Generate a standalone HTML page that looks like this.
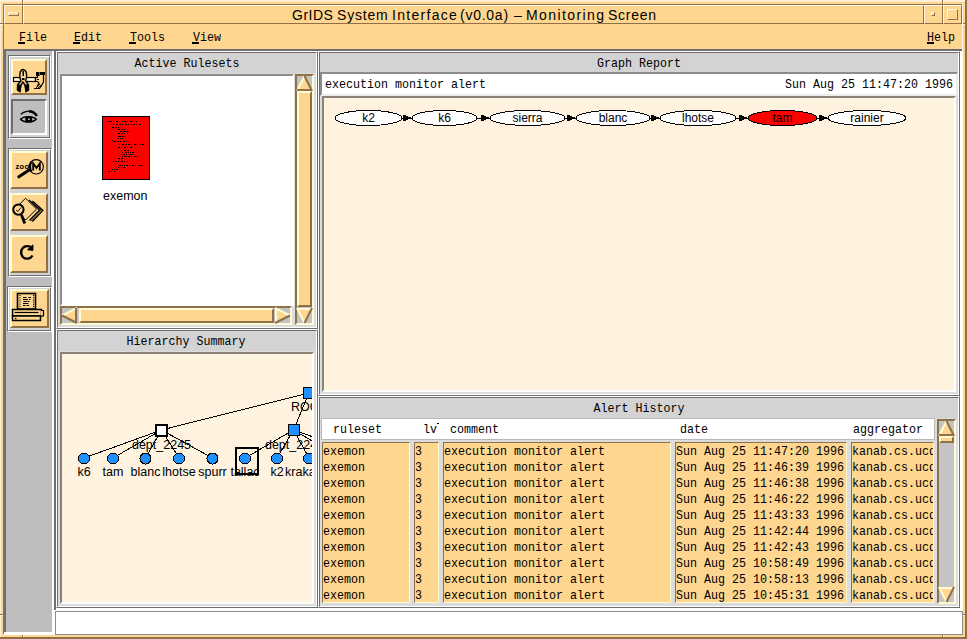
<!DOCTYPE html><html><head><meta charset="utf-8"><style>
*{margin:0;padding:0}
html,body{width:967px;height:639px;overflow:hidden;background:#fed690}
div,span,svg{position:absolute;box-sizing:content-box}
.m{font-family:"Liberation Mono",monospace;font-size:11.67px;line-height:14px;white-space:pre;color:#000;display:inline-block;transform:scaleY(1.12);transform-origin:0 70%}
.s{font-family:"Liberation Sans",sans-serif;white-space:pre;color:#000}
.title{font-size:14px;letter-spacing:0.81px;line-height:16px}
u{text-decoration:none}
</style></head><body><div style="left:0px;top:0px;width:967px;height:639px;background:#fed690;"></div><div style="left:0px;top:0px;width:967px;height:2px;background:#fdefd8;"></div><div style="left:0px;top:0px;width:1px;height:639px;background:#fdefd8;"></div><div style="left:965px;top:0px;width:2px;height:639px;background:#8f7049;"></div><div style="left:0px;top:637px;width:967px;height:2px;background:#8f7049;"></div><div style="left:3px;top:4px;width:959px;height:1px;background:#8f7049;"></div><div style="left:3px;top:4px;width:1px;height:631px;background:#8f7049;"></div><div style="left:962px;top:4px;width:1px;height:631px;background:#fff8e8;"></div><div style="left:3px;top:634px;width:960px;height:1px;background:#fff8e8;"></div><div style="left:22px;top:0px;width:1px;height:4px;background:#8f7049;"></div><div style="left:23px;top:0px;width:1px;height:4px;background:#fff8e8;"></div><div style="left:0px;top:23px;width:3px;height:1px;background:#8f7049;"></div><div style="left:0px;top:24px;width:3px;height:1px;background:#fff8e8;"></div><div style="left:942px;top:0px;width:1px;height:4px;background:#8f7049;"></div><div style="left:943px;top:0px;width:1px;height:4px;background:#fff8e8;"></div><div style="left:963px;top:23px;width:2px;height:1px;background:#8f7049;"></div><div style="left:963px;top:24px;width:2px;height:1px;background:#fff8e8;"></div><div style="left:22px;top:635px;width:1px;height:2px;background:#8f7049;"></div><div style="left:23px;top:635px;width:1px;height:2px;background:#fff8e8;"></div><div style="left:0px;top:614px;width:3px;height:1px;background:#8f7049;"></div><div style="left:0px;top:615px;width:3px;height:1px;background:#fff8e8;"></div><div style="left:942px;top:635px;width:1px;height:2px;background:#8f7049;"></div><div style="left:943px;top:635px;width:1px;height:2px;background:#fff8e8;"></div><div style="left:963px;top:614px;width:2px;height:1px;background:#8f7049;"></div><div style="left:963px;top:615px;width:2px;height:1px;background:#fff8e8;"></div><div style="left:4px;top:5px;width:17px;height:17px;border:1px solid;border-color:#fff8e8 #8f7049 #8f7049 #fff8e8;"></div><div style="left:23px;top:5px;width:899px;height:17px;border:1px solid;border-color:#fff8e8 #8f7049 #8f7049 #fff8e8;"></div><div style="left:924px;top:5px;width:17px;height:17px;border:1px solid;border-color:#fff8e8 #8f7049 #8f7049 #fff8e8;"></div><div style="left:943px;top:5px;width:17px;height:17px;border:1px solid;border-color:#fff8e8 #8f7049 #8f7049 #fff8e8;"></div><div style="left:8px;top:12px;width:9px;height:2px;border:1px solid;border-color:#fff8e8 #8f7049 #8f7049 #fff8e8;"></div><div style="left:931px;top:12px;width:2px;height:2px;border:1px solid;border-color:#fff8e8 #8f7049 #8f7049 #fff8e8;"></div><div style="left:947px;top:9px;width:9px;height:9px;border:1px solid;border-color:#fff8e8 #8f7049 #8f7049 #fff8e8;"></div><span class="s title" style="left:292px;top:7px;letter-spacing:0.5px">GrIDS</span><span class="s title" style="left:337px;top:7px;letter-spacing:0.8px">System</span><span class="s title" style="left:392px;top:7px;letter-spacing:1.3px">Interface</span><span class="s title" style="left:460px;top:7px;letter-spacing:0.75px">(v0.0a)</span><span class="s title" style="left:514px;top:7px;letter-spacing:0px">–</span><span class="s title" style="left:526px;top:7px;letter-spacing:1.4px">Monitoring</span><span class="s title" style="left:608px;top:7px;letter-spacing:0.75px">Screen</span><span class="m" style="left:19px;top:31px;">File</span><span class="m" style="left:74px;top:31px;">Edit</span><span class="m" style="left:130px;top:31px;">Tools</span><span class="m" style="left:193px;top:31px;">View</span><span class="m" style="left:927px;top:31px;">Help</span><div style="left:18px;top:42px;width:7px;height:2px;background:#000;"></div><div style="left:73px;top:42px;width:7px;height:2px;background:#000;"></div><div style="left:129px;top:42px;width:7px;height:2px;background:#000;"></div><div style="left:192px;top:42px;width:7px;height:2px;background:#000;"></div><div style="left:927px;top:42px;width:7px;height:2px;background:#000;"></div><div style="left:4px;top:49px;width:958px;height:586px;background:#ffffff;"></div><div style="left:4px;top:49px;width:958px;height:2px;background:#6e6e6e;"></div><div style="left:4px;top:51px;width:2px;height:581px;background:#6e6e6e;"></div><div style="left:6px;top:51px;width:46px;height:581px;background:#bebebe;"></div><div style="left:54px;top:51px;width:2px;height:559px;background:#6e6e6e;"></div><div style="left:56px;top:51px;width:262px;height:278px;background:#dcdcdc;"></div><div style="left:56px;top:51px;width:260px;height:276px;border:1px solid;border-color:#ffffff #6e6e6e #6e6e6e #ffffff;"></div><div style="left:57px;top:52px;width:258px;height:274px;border:1px solid;border-color:#6e6e6e #ffffff #ffffff #6e6e6e;"></div><div style="left:58px;top:53px;width:258px;height:20px;background:#d3d3d3;"></div><span class="m" style="left:187px;top:57px;transform:translateX(-50%) scaleY(1.12);transform-origin:50% 70%;">Active Rulesets</span><div style="left:56px;top:329px;width:262px;height:279px;background:#dcdcdc;"></div><div style="left:56px;top:329px;width:260px;height:277px;border:1px solid;border-color:#ffffff #6e6e6e #6e6e6e #ffffff;"></div><div style="left:57px;top:330px;width:258px;height:275px;border:1px solid;border-color:#6e6e6e #ffffff #ffffff #6e6e6e;"></div><div style="left:58px;top:331px;width:258px;height:20px;background:#d3d3d3;"></div><span class="m" style="left:186px;top:335px;transform:translateX(-50%) scaleY(1.12);transform-origin:50% 70%;">Hierarchy Summary</span><div style="left:318px;top:51px;width:642px;height:345px;background:#dcdcdc;"></div><div style="left:318px;top:51px;width:640px;height:343px;border:1px solid;border-color:#ffffff #6e6e6e #6e6e6e #ffffff;"></div><div style="left:319px;top:52px;width:638px;height:341px;border:1px solid;border-color:#6e6e6e #ffffff #ffffff #6e6e6e;"></div><div style="left:320px;top:53px;width:638px;height:20px;background:#d3d3d3;"></div><span class="m" style="left:639px;top:57px;transform:translateX(-50%) scaleY(1.12);transform-origin:50% 70%;">Graph Report</span><div style="left:318px;top:396px;width:642px;height:212px;background:#dcdcdc;"></div><div style="left:318px;top:396px;width:640px;height:210px;border:1px solid;border-color:#ffffff #6e6e6e #6e6e6e #ffffff;"></div><div style="left:319px;top:397px;width:638px;height:208px;border:1px solid;border-color:#6e6e6e #ffffff #ffffff #6e6e6e;"></div><div style="left:320px;top:398px;width:638px;height:20px;background:#d3d3d3;"></div><span class="m" style="left:639px;top:402px;transform:translateX(-50%) scaleY(1.12);transform-origin:50% 70%;">Alert History</span><div style="left:55px;top:611px;width:906px;height:22px;border:1px solid;border-color:#8c8c8c #8c8c8c #8c8c8c #8c8c8c;background:#ffffff;"></div><div style="left:60px;top:74px;width:230px;height:228px;border:2px solid;border-color:#8c8c8c #ffffff #ffffff #8c8c8c;background:#ffffff;"></div><div style="left:295px;top:74px;width:15px;height:247px;border:2px solid;border-color:#8f7049 #fffbd2 #fffbd2 #8f7049;background:#c4c4c4;"></div><svg style="left:297px;top:76px;overflow:visible" width="15" height="15" viewBox="0 0 15 15"><polygon points="7.5,0 0,15 15,15" fill="#fed690"/><path d="M7.5 0 L0 15" stroke="#fffbd2" stroke-width="2"/><path d="M7.5 0 L15 15 M0 14 H15" stroke="#8f7049" stroke-width="2"/></svg><div style="left:297px;top:91px;width:11px;height:212px;border:2px solid;border-color:#fffbd2 #8f7049 #8f7049 #fffbd2;background:#fed690;"></div><svg style="left:297px;top:308px;overflow:visible" width="15" height="15" viewBox="0 0 15 15"><polygon points="0,0 15,0 7.5,15" fill="#fed690"/><path d="M0 1 H15 M0 0 L7.5 15" stroke="#fffbd2" stroke-width="2"/><path d="M15 0 L7.5 15" stroke="#8f7049" stroke-width="2"/></svg><div style="left:60px;top:306px;width:228px;height:15px;border:2px solid;border-color:#8f7049 #fffbd2 #fffbd2 #8f7049;background:#c4c4c4;"></div><svg style="left:62px;top:308px;overflow:visible" width="15" height="15" viewBox="0 0 15 15"><polygon points="0,7.5 15,0 15,15" fill="#fed690"/><path d="M0 7.5 L15 0" stroke="#fffbd2" stroke-width="2"/><path d="M0 7.5 L15 15 M14 0 V15" stroke="#8f7049" stroke-width="2"/></svg><div style="left:79px;top:308px;width:191px;height:11px;border:2px solid;border-color:#fffbd2 #8f7049 #8f7049 #fffbd2;background:#fed690;"></div><svg style="left:275px;top:308px;overflow:visible" width="15" height="15" viewBox="0 0 15 15"><polygon points="0,0 15,7.5 0,15" fill="#fed690"/><path d="M1 0 V15 M0 0 L15 7.5" stroke="#fffbd2" stroke-width="2"/><path d="M0 15 L15 7.5" stroke="#8f7049" stroke-width="2"/></svg><div style="left:102px;top:116px;width:48px;height:64px;background:#000;"></div><div style="left:103px;top:117px;width:46px;height:62px;background:#ff0000;"></div><div style="left:108px;top:121px;width:29px;height:1px;background:repeating-linear-gradient(90deg,#000 0 1px,transparent 1px 2px,#000 2px 4px,transparent 4px 5px,#000 5px 6px,transparent 6px 8px,#000 8px 10px,transparent 10px 11px,#000 11px 12px,transparent 12px 14px);background-position:0px 0"></div><div style="left:112px;top:124px;width:29px;height:1px;background:repeating-linear-gradient(90deg,#000 0 1px,transparent 1px 2px,#000 2px 4px,transparent 4px 5px,#000 5px 6px,transparent 6px 8px,#000 8px 10px,transparent 10px 11px,#000 11px 12px,transparent 12px 14px);background-position:5px 0"></div><div style="left:112px;top:127px;width:9px;height:1px;background:repeating-linear-gradient(90deg,#000 0 1px,transparent 1px 2px,#000 2px 4px,transparent 4px 5px,#000 5px 6px,transparent 6px 8px,#000 8px 10px,transparent 10px 11px,#000 11px 12px,transparent 12px 14px);background-position:10px 0"></div><div style="left:118px;top:129px;width:10px;height:1px;background:repeating-linear-gradient(90deg,#000 0 1px,transparent 1px 2px,#000 2px 4px,transparent 4px 5px,#000 5px 6px,transparent 6px 8px,#000 8px 10px,transparent 10px 11px,#000 11px 12px,transparent 12px 14px);background-position:1px 0"></div><div style="left:118px;top:131px;width:12px;height:1px;background:repeating-linear-gradient(90deg,#000 0 1px,transparent 1px 2px,#000 2px 4px,transparent 4px 5px,#000 5px 6px,transparent 6px 8px,#000 8px 10px,transparent 10px 11px,#000 11px 12px,transparent 12px 14px);background-position:6px 0"></div><div style="left:118px;top:133px;width:10px;height:1px;background:repeating-linear-gradient(90deg,#000 0 1px,transparent 1px 2px,#000 2px 4px,transparent 4px 5px,#000 5px 6px,transparent 6px 8px,#000 8px 10px,transparent 10px 11px,#000 11px 12px,transparent 12px 14px);background-position:11px 0"></div><div style="left:118px;top:136px;width:10px;height:1px;background:repeating-linear-gradient(90deg,#000 0 1px,transparent 1px 2px,#000 2px 4px,transparent 4px 5px,#000 5px 6px,transparent 6px 8px,#000 8px 10px,transparent 10px 11px,#000 11px 12px,transparent 12px 14px);background-position:2px 0"></div><div style="left:118px;top:138px;width:5px;height:1px;background:repeating-linear-gradient(90deg,#000 0 1px,transparent 1px 2px,#000 2px 4px,transparent 4px 5px,#000 5px 6px,transparent 6px 8px,#000 8px 10px,transparent 10px 11px,#000 11px 12px,transparent 12px 14px);background-position:7px 0"></div><div style="left:112px;top:140px;width:2px;height:1px;background:repeating-linear-gradient(90deg,#000 0 1px,transparent 1px 2px,#000 2px 4px,transparent 4px 5px,#000 5px 6px,transparent 6px 8px,#000 8px 10px,transparent 10px 11px,#000 11px 12px,transparent 12px 14px);background-position:12px 0"></div><div style="left:112px;top:141px;width:18px;height:1px;background:repeating-linear-gradient(90deg,#000 0 1px,transparent 1px 2px,#000 2px 4px,transparent 4px 5px,#000 5px 6px,transparent 6px 8px,#000 8px 10px,transparent 10px 11px,#000 11px 12px,transparent 12px 14px);background-position:3px 0"></div><div style="left:118px;top:144px;width:26px;height:1px;background:repeating-linear-gradient(90deg,#000 0 1px,transparent 1px 2px,#000 2px 4px,transparent 4px 5px,#000 5px 6px,transparent 6px 8px,#000 8px 10px,transparent 10px 11px,#000 11px 12px,transparent 12px 14px);background-position:8px 0"></div><div style="left:118px;top:147px;width:15px;height:1px;background:repeating-linear-gradient(90deg,#000 0 1px,transparent 1px 2px,#000 2px 4px,transparent 4px 5px,#000 5px 6px,transparent 6px 8px,#000 8px 10px,transparent 10px 11px,#000 11px 12px,transparent 12px 14px);background-position:13px 0"></div><div style="left:121px;top:150px;width:9px;height:1px;background:repeating-linear-gradient(90deg,#000 0 1px,transparent 1px 2px,#000 2px 4px,transparent 4px 5px,#000 5px 6px,transparent 6px 8px,#000 8px 10px,transparent 10px 11px,#000 11px 12px,transparent 12px 14px);background-position:4px 0"></div><div style="left:121px;top:152px;width:13px;height:1px;background:repeating-linear-gradient(90deg,#000 0 1px,transparent 1px 2px,#000 2px 4px,transparent 4px 5px,#000 5px 6px,transparent 6px 8px,#000 8px 10px,transparent 10px 11px,#000 11px 12px,transparent 12px 14px);background-position:9px 0"></div><div style="left:121px;top:154px;width:12px;height:1px;background:repeating-linear-gradient(90deg,#000 0 1px,transparent 1px 2px,#000 2px 4px,transparent 4px 5px,#000 5px 6px,transparent 6px 8px,#000 8px 10px,transparent 10px 11px,#000 11px 12px,transparent 12px 14px);background-position:0px 0"></div><div style="left:121px;top:156px;width:18px;height:1px;background:repeating-linear-gradient(90deg,#000 0 1px,transparent 1px 2px,#000 2px 4px,transparent 4px 5px,#000 5px 6px,transparent 6px 8px,#000 8px 10px,transparent 10px 11px,#000 11px 12px,transparent 12px 14px);background-position:5px 0"></div><div style="left:118px;top:158px;width:6px;height:1px;background:repeating-linear-gradient(90deg,#000 0 1px,transparent 1px 2px,#000 2px 4px,transparent 4px 5px,#000 5px 6px,transparent 6px 8px,#000 8px 10px,transparent 10px 11px,#000 11px 12px,transparent 12px 14px);background-position:10px 0"></div><div style="left:112px;top:161px;width:16px;height:1px;background:repeating-linear-gradient(90deg,#000 0 1px,transparent 1px 2px,#000 2px 4px,transparent 4px 5px,#000 5px 6px,transparent 6px 8px,#000 8px 10px,transparent 10px 11px,#000 11px 12px,transparent 12px 14px);background-position:1px 0"></div><div style="left:118px;top:165px;width:27px;height:1px;background:repeating-linear-gradient(90deg,#000 0 1px,transparent 1px 2px,#000 2px 4px,transparent 4px 5px,#000 5px 6px,transparent 6px 8px,#000 8px 10px,transparent 10px 11px,#000 11px 12px,transparent 12px 14px);background-position:6px 0"></div><div style="left:118px;top:167px;width:8px;height:1px;background:repeating-linear-gradient(90deg,#000 0 1px,transparent 1px 2px,#000 2px 4px,transparent 4px 5px,#000 5px 6px,transparent 6px 8px,#000 8px 10px,transparent 10px 11px,#000 11px 12px,transparent 12px 14px);background-position:11px 0"></div><div style="left:112px;top:169px;width:7px;height:1px;background:repeating-linear-gradient(90deg,#000 0 1px,transparent 1px 2px,#000 2px 4px,transparent 4px 5px,#000 5px 6px,transparent 6px 8px,#000 8px 10px,transparent 10px 11px,#000 11px 12px,transparent 12px 14px);background-position:2px 0"></div><div style="left:107px;top:171px;width:8px;height:1px;background:repeating-linear-gradient(90deg,#000 0 1px,transparent 1px 2px,#000 2px 4px,transparent 4px 5px,#000 5px 6px,transparent 6px 8px,#000 8px 10px,transparent 10px 11px,#000 11px 12px,transparent 12px 14px);background-position:7px 0"></div><span class="s" style="left:103px;top:189px;font-size:12.5px;line-height:14px">exemon</span><div style="left:320px;top:72px;width:634px;height:20px;border:2px solid;border-color:#8c8c8c #ececec #ececec #8c8c8c;background:#ffffff;"></div><span class="m" style="left:325px;top:78px;">execution monitor alert</span><span class="m" style="left:785px;top:78px;">Sun Aug 25 11:47:20 1996</span><div style="left:322px;top:96px;width:630px;height:292px;border:2px solid;border-color:#8a8276 #ffffff #ffffff #8a8276;background:#fff3e0;"></div><svg style="left:322px;top:96px" width="634" height="296" viewBox="0 0 634 296" shape-rendering="crispEdges"><ellipse cx="46.5" cy="22" rx="33.5" ry="7.5" fill="#ffffff" stroke="#000" stroke-width="1"/><text x="46.5" y="25.6" text-anchor="middle" font-family="Liberation Sans" font-size="12" fill="#000">k2</text><path d="M80 22 H90" stroke="#000"/><polygon points="90,22 81,18.5 81,25.5" fill="#000"/><ellipse cx="122.5" cy="22" rx="32.5" ry="7.5" fill="#ffffff" stroke="#000" stroke-width="1"/><text x="122.5" y="25.6" text-anchor="middle" font-family="Liberation Sans" font-size="12" fill="#000">k6</text><path d="M155 22 H168" stroke="#000"/><polygon points="168,22 159,18.5 159,25.5" fill="#000"/><ellipse cx="205.5" cy="22" rx="37.5" ry="7.5" fill="#ffffff" stroke="#000" stroke-width="1"/><text x="205.5" y="25.6" text-anchor="middle" font-family="Liberation Sans" font-size="12" fill="#000">sierra</text><path d="M243 22 H254" stroke="#000"/><polygon points="254,22 245,18.5 245,25.5" fill="#000"/><ellipse cx="291.0" cy="22" rx="37.0" ry="7.5" fill="#ffffff" stroke="#000" stroke-width="1"/><text x="291.0" y="25.6" text-anchor="middle" font-family="Liberation Sans" font-size="12" fill="#000">blanc</text><path d="M328 22 H338" stroke="#000"/><polygon points="338,22 329,18.5 329,25.5" fill="#000"/><ellipse cx="376.0" cy="22" rx="38.0" ry="7.5" fill="#ffffff" stroke="#000" stroke-width="1"/><text x="376.0" y="25.6" text-anchor="middle" font-family="Liberation Sans" font-size="12" fill="#000">lhotse</text><path d="M414 22 H426" stroke="#000"/><polygon points="426,22 417,18.5 417,25.5" fill="#000"/><ellipse cx="460.5" cy="22" rx="34.5" ry="7.5" fill="#ff0000" stroke="#000" stroke-width="1"/><text x="460.5" y="25.6" text-anchor="middle" font-family="Liberation Sans" font-size="12" fill="#000">tam</text><path d="M495 22 H506" stroke="#000"/><polygon points="506,22 497,18.5 497,25.5" fill="#000"/><ellipse cx="545.0" cy="22" rx="39.0" ry="7.5" fill="#ffffff" stroke="#000" stroke-width="1"/><text x="545.0" y="25.6" text-anchor="middle" font-family="Liberation Sans" font-size="12" fill="#000">rainier</text></svg><div style="left:60px;top:352px;width:250px;height:248px;border:2px solid;border-color:#8a8276 #ffffff #ffffff #8a8276;background:#fff3e0;"></div><svg style="left:62px;top:354px" width="250" height="250" viewBox="0 0 250 250" shape-rendering="crispEdges"><path d="M247,39 L99.5,76 M247,39 L231.5,76" stroke="#000" fill="none"/><path d="M99.5,76 L22,104" stroke="#000"/><path d="M99.5,76 L51,104" stroke="#000"/><path d="M99.5,76 L83.5,104" stroke="#000"/><path d="M99.5,76 L117,104" stroke="#000"/><path d="M99.5,76 L150.5,104" stroke="#000"/><path d="M231.5,76 L183,104" stroke="#000"/><path d="M231.5,76 L215,104" stroke="#000"/><path d="M231.5,76 L247,104" stroke="#000"/><path d="M231.5,76 L279,104" stroke="#000"/><path d="M231.5,76 L311,104" stroke="#000"/><circle cx="22" cy="104.5" r="5.5" fill="#1e90ff" stroke="#000"/><text x="22" y="122" text-anchor="middle" font-family="Liberation Sans" font-size="12.5" fill="#000">k6</text><circle cx="51" cy="104.5" r="5.5" fill="#1e90ff" stroke="#000"/><text x="51" y="122" text-anchor="middle" font-family="Liberation Sans" font-size="12.5" fill="#000">tam</text><circle cx="83.5" cy="104.5" r="5.5" fill="#1e90ff" stroke="#000"/><text x="83.5" y="122" text-anchor="middle" font-family="Liberation Sans" font-size="12.5" fill="#000">blanc</text><circle cx="117" cy="104.5" r="5.5" fill="#1e90ff" stroke="#000"/><text x="117" y="122" text-anchor="middle" font-family="Liberation Sans" font-size="12.5" fill="#000">lhotse</text><circle cx="150.5" cy="104.5" r="5.5" fill="#1e90ff" stroke="#000"/><text x="150.5" y="122" text-anchor="middle" font-family="Liberation Sans" font-size="12.5" fill="#000">spurr</text><circle cx="183" cy="104.5" r="5.5" fill="#1e90ff" stroke="#000"/><text x="183" y="122" text-anchor="middle" font-family="Liberation Sans" font-size="12.5" fill="#000">tallac</text><circle cx="215" cy="104.5" r="5.5" fill="#1e90ff" stroke="#000"/><text x="215" y="122" text-anchor="middle" font-family="Liberation Sans" font-size="12.5" fill="#000">k2</text><circle cx="247" cy="104.5" r="5.5" fill="#1e90ff" stroke="#000"/><text x="247" y="122" text-anchor="middle" font-family="Liberation Sans" font-size="12.5" fill="#000">krakatoa</text><rect x="94.0" y="70.5" width="11" height="11" fill="#fff" stroke="#000" stroke-width="2"/><rect x="226.0" y="70.5" width="11" height="11" fill="#1e90ff" stroke="#000"/><rect x="241.5" y="33.5" width="11" height="11" fill="#1e90ff" stroke="#000"/><text x="99.5" y="95" text-anchor="middle" font-family="Liberation Sans" font-size="12.5" fill="#000">dept_2245</text><text x="232.5" y="95" text-anchor="middle" font-family="Liberation Sans" font-size="12.5" fill="#000">dept_2246</text><text x="247" y="57" text-anchor="middle" font-family="Liberation Sans" font-size="12.5" fill="#000">ROOT</text><rect x="174" y="94" width="22" height="26" fill="none" stroke="#000" stroke-width="2"/></svg><div style="left:321px;top:418px;width:612px;height:20px;border:1px solid;border-color:#b8b8b8 #b8b8b8 #b8b8b8 #b8b8b8;background:#ffffff;"></div><span class="m" style="left:333px;top:423px;">ruleset</span><span class="m" style="left:423px;top:423px;">lv</span><div style="left:437px;top:423px;width:2px;height:1px;background:#000;"></div><span class="m" style="left:450px;top:423px;">comment</span><span class="m" style="left:680px;top:423px;">date</span><span class="m" style="left:853px;top:423px;">aggregator</span><div style="left:322px;top:442px;width:86px;height:159px;border:1px solid;border-color:#8f7049 #fffbd2 #fffbd2 #8f7049;background:#fed690;"></div><div style="left:414px;top:442px;width:23px;height:159px;border:1px solid;border-color:#8f7049 #fffbd2 #fffbd2 #8f7049;background:#fed690;"></div><div style="left:443px;top:442px;width:226px;height:159px;border:1px solid;border-color:#8f7049 #fffbd2 #fffbd2 #8f7049;background:#fed690;"></div><div style="left:675px;top:442px;width:170px;height:159px;border:1px solid;border-color:#8f7049 #fffbd2 #fffbd2 #8f7049;background:#fed690;"></div><div style="left:851px;top:442px;width:81px;height:159px;border:1px solid;border-color:#8f7049 #fffbd2 #fffbd2 #8f7049;background:#fed690;"></div><span class="m" style="left:323px;top:445px;">exemon</span><span class="m" style="left:415px;top:445px;">3</span><span class="m" style="left:444px;top:445px;">execution monitor alert</span><span class="m" style="left:676px;top:445px;">Sun Aug 25 11:47:20 1996</span><div style="left:852px;top:445px;width:81px;height:16px;overflow:hidden"><span class="m" style="left:0;top:0">kanab.cs.ucdavis.edu</span></div><span class="m" style="left:323px;top:461px;">exemon</span><span class="m" style="left:415px;top:461px;">3</span><span class="m" style="left:444px;top:461px;">execution monitor alert</span><span class="m" style="left:676px;top:461px;">Sun Aug 25 11:46:39 1996</span><div style="left:852px;top:461px;width:81px;height:16px;overflow:hidden"><span class="m" style="left:0;top:0">kanab.cs.ucdavis.edu</span></div><span class="m" style="left:323px;top:477px;">exemon</span><span class="m" style="left:415px;top:477px;">3</span><span class="m" style="left:444px;top:477px;">execution monitor alert</span><span class="m" style="left:676px;top:477px;">Sun Aug 25 11:46:38 1996</span><div style="left:852px;top:477px;width:81px;height:16px;overflow:hidden"><span class="m" style="left:0;top:0">kanab.cs.ucdavis.edu</span></div><span class="m" style="left:323px;top:493px;">exemon</span><span class="m" style="left:415px;top:493px;">3</span><span class="m" style="left:444px;top:493px;">execution monitor alert</span><span class="m" style="left:676px;top:493px;">Sun Aug 25 11:46:22 1996</span><div style="left:852px;top:493px;width:81px;height:16px;overflow:hidden"><span class="m" style="left:0;top:0">kanab.cs.ucdavis.edu</span></div><span class="m" style="left:323px;top:509px;">exemon</span><span class="m" style="left:415px;top:509px;">3</span><span class="m" style="left:444px;top:509px;">execution monitor alert</span><span class="m" style="left:676px;top:509px;">Sun Aug 25 11:43:33 1996</span><div style="left:852px;top:509px;width:81px;height:16px;overflow:hidden"><span class="m" style="left:0;top:0">kanab.cs.ucdavis.edu</span></div><span class="m" style="left:323px;top:525px;">exemon</span><span class="m" style="left:415px;top:525px;">3</span><span class="m" style="left:444px;top:525px;">execution monitor alert</span><span class="m" style="left:676px;top:525px;">Sun Aug 25 11:42:44 1996</span><div style="left:852px;top:525px;width:81px;height:16px;overflow:hidden"><span class="m" style="left:0;top:0">kanab.cs.ucdavis.edu</span></div><span class="m" style="left:323px;top:541px;">exemon</span><span class="m" style="left:415px;top:541px;">3</span><span class="m" style="left:444px;top:541px;">execution monitor alert</span><span class="m" style="left:676px;top:541px;">Sun Aug 25 11:42:43 1996</span><div style="left:852px;top:541px;width:81px;height:16px;overflow:hidden"><span class="m" style="left:0;top:0">kanab.cs.ucdavis.edu</span></div><span class="m" style="left:323px;top:557px;">exemon</span><span class="m" style="left:415px;top:557px;">3</span><span class="m" style="left:444px;top:557px;">execution monitor alert</span><span class="m" style="left:676px;top:557px;">Sun Aug 25 10:58:49 1996</span><div style="left:852px;top:557px;width:81px;height:16px;overflow:hidden"><span class="m" style="left:0;top:0">kanab.cs.ucdavis.edu</span></div><span class="m" style="left:323px;top:573px;">exemon</span><span class="m" style="left:415px;top:573px;">3</span><span class="m" style="left:444px;top:573px;">execution monitor alert</span><span class="m" style="left:676px;top:573px;">Sun Aug 25 10:58:13 1996</span><div style="left:852px;top:573px;width:81px;height:16px;overflow:hidden"><span class="m" style="left:0;top:0">kanab.cs.ucdavis.edu</span></div><span class="m" style="left:323px;top:589px;">exemon</span><span class="m" style="left:415px;top:589px;">3</span><span class="m" style="left:444px;top:589px;">execution monitor alert</span><span class="m" style="left:676px;top:589px;">Sun Aug 25 10:45:31 1996</span><div style="left:852px;top:589px;width:81px;height:16px;overflow:hidden"><span class="m" style="left:0;top:0">kanab.cs.ucdavis.edu</span></div><div style="left:937px;top:419px;width:15px;height:181px;border:2px solid;border-color:#8f7049 #fffbd2 #fffbd2 #8f7049;background:#c4c4c4;"></div><svg style="left:939px;top:421px;overflow:visible" width="15" height="15" viewBox="0 0 15 15"><polygon points="7.5,0 0,15 15,15" fill="#fed690"/><path d="M7.5 0 L0 15" stroke="#fffbd2" stroke-width="2"/><path d="M7.5 0 L15 15 M0 14 H15" stroke="#8f7049" stroke-width="2"/></svg><div style="left:939px;top:436px;width:11px;height:3px;border:2px solid;border-color:#fffbd2 #8f7049 #8f7049 #fffbd2;background:#fed690;"></div><svg style="left:939px;top:587px;overflow:visible" width="15" height="15" viewBox="0 0 15 15"><polygon points="0,0 15,0 7.5,15" fill="#fed690"/><path d="M0 1 H15 M0 0 L7.5 15" stroke="#fffbd2" stroke-width="2"/><path d="M15 0 L7.5 15" stroke="#8f7049" stroke-width="2"/></svg><div style="left:8px;top:55px;width:43px;height:84px;background:#d3d3d3;"></div><div style="left:8px;top:55px;width:41px;height:82px;border:1px solid;border-color:#6e6e6e #ffffff #ffffff #6e6e6e;"></div><div style="left:9px;top:56px;width:39px;height:80px;border:1px solid;border-color:#ffffff #6e6e6e #6e6e6e #ffffff;"></div><div style="left:8px;top:148px;width:44px;height:129px;background:#d3d3d3;"></div><div style="left:8px;top:148px;width:42px;height:127px;border:1px solid;border-color:#6e6e6e #ffffff #ffffff #6e6e6e;"></div><div style="left:9px;top:149px;width:40px;height:125px;border:1px solid;border-color:#ffffff #6e6e6e #6e6e6e #ffffff;"></div><div style="left:7px;top:286px;width:45px;height:46px;background:#d3d3d3;"></div><div style="left:7px;top:286px;width:43px;height:44px;border:1px solid;border-color:#6e6e6e #ffffff #ffffff #6e6e6e;"></div><div style="left:8px;top:287px;width:41px;height:42px;border:1px solid;border-color:#ffffff #6e6e6e #6e6e6e #ffffff;"></div><div style="left:11px;top:59px;width:32px;height:32px;border:2px solid;border-color:#fffbd2 #8f7049 #8f7049 #fffbd2;background:#fed690;"></div><div style="left:11px;top:99px;width:32px;height:32px;border:2px solid;border-color:#6e6e6e #ffffff #ffffff #6e6e6e;background:#bebebe;"></div><div style="left:10px;top:151px;width:34px;height:34px;border:2px solid;border-color:#fffbd2 #8f7049 #8f7049 #fffbd2;background:#fed690;"></div><div style="left:10px;top:193px;width:34px;height:34px;border:2px solid;border-color:#fffbd2 #8f7049 #8f7049 #fffbd2;background:#fed690;"></div><div style="left:10px;top:235px;width:34px;height:34px;border:2px solid;border-color:#fffbd2 #8f7049 #8f7049 #fffbd2;background:#fed690;"></div><div style="left:10px;top:289px;width:35px;height:35px;border:2px solid;border-color:#fffbd2 #8f7049 #8f7049 #fffbd2;background:#fed690;"></div><svg style="left:11px;top:59px" width="36" height="36" viewBox="0 0 36 36">
<rect x="2.5" y="18.5" width="22" height="4" fill="#fff3c4" stroke="#000" stroke-width="1.2"/>
<path d="M12 10.5 C9 11 8.5 15 9 19 L10 22 L8 24 L6.5 26 L6.5 31 L9 32.5 L10 26 L12 23 L14 26 L15 32.5 L17.5 31 L17.5 26 L15.5 23 L14.5 21.5 L15.5 19 C16 15 15 11 12 10.5 Z" fill="#fed690" stroke="#000" stroke-width="1.4"/>
<path d="M6.5 26 L6.5 31 L9 32.5 L10 26 Z M17.5 26 L17.5 31 L15 32.5 L14 26 Z" fill="#000" stroke="#000"/>
<rect x="11.5" y="12" width="1.5" height="5" fill="#000"/>
<rect x="11" y="19" width="2.5" height="2" fill="#000"/>
<rect x="25" y="13" width="3.5" height="4" fill="#000"/>
<rect x="29" y="13" width="5" height="3" fill="#000"/>
<path d="M26.5 16.5 V18.5 H24.5 V22.5 H26.5 L28 24 L26 28 M32.5 16 V23 L28.5 29.5 H23" fill="none" stroke="#000" stroke-width="1.2"/>
<rect x="26" y="20" width="2" height="1" fill="#000"/>
<path d="M25 29 L29 25 M27 29 L30 26 M29 29 L31 26" stroke="#000" stroke-width="0.8"/>
</svg><svg style="left:11px;top:99px" width="36" height="36" viewBox="0 0 36 36">
<path d="M9.8 15.2 C13 12.2 19 11.2 23 13.2" fill="none" stroke="#000" stroke-width="1.4"/>
<path d="M18 12.3 C21.5 12.6 24.5 14.2 25.8 17" fill="none" stroke="#000" stroke-width="2.4"/>
<path d="M9.6 20.3 C12.5 16.8 22 16.8 25.2 20.3 C22 23.8 12.5 23.8 9.6 20.3 Z" fill="none" stroke="#000" stroke-width="1.5"/>
<path d="M14.3 17.4 H21.2 V23.4 H14.3 Z" fill="#000"/>
<rect x="17.2" y="19.6" width="1.4" height="1.4" fill="#fff"/>
</svg><svg style="left:10px;top:151px" width="38" height="38" viewBox="0 0 38 38">
<text x="5.5" y="18" font-family="Liberation Sans" font-size="7.5" font-weight="bold" fill="#000" letter-spacing="0.3">zoo</text>
<circle cx="26.2" cy="15.8" r="7.2" fill="none" stroke="#000" stroke-width="1.1"/>
<path d="M21.5 11 C19.5 13 19.5 18.5 21.5 20.5" fill="none" stroke="#000" stroke-width="2.2"/>
<path d="M23.2 19.5 V12.5 L26.5 17 L29.8 12.5 V19.5" fill="none" stroke="#000" stroke-width="1.9"/>
<path d="M7.8 26.5 L19.5 18.8" stroke="#000" stroke-width="3"/>
</svg><svg style="left:10px;top:193px" width="38" height="38" viewBox="0 0 38 38">
<path d="M15.6 5.2 L26.5 16.1 L15.6 27 L4.7 16.1 Z" fill="#fed690" stroke="#000" stroke-width="1"/>
<path d="M19 7 L29.6 17 L19.5 27.5" fill="none" stroke="#000" stroke-width="1.4"/>
<path d="M20.5 8.5 L31 17.2 L21 28" fill="none" stroke="#000" stroke-width="0.8"/>
<path d="M22.4 8 L32.8 17.4 L22.4 28.6" fill="none" stroke="#000" stroke-width="1.4"/>
<circle cx="8.4" cy="16.6" r="5.2" fill="#fed690" stroke="#000" stroke-width="2"/>
<path d="M6 17 L8 18.5 L11 14.5" fill="none" stroke="#000" stroke-width="0.9"/>
<path d="M11.5 22 L14.8 30.5" stroke="#000" stroke-width="2.8"/>
</svg><svg style="left:10px;top:235px" width="38" height="38" viewBox="0 0 38 38">
<path d="M21.5 12.5 C19.5 10.7 15 10.5 12.8 13 C10.5 15.5 10.7 20 13.2 22.3 C15.7 24.4 20.5 24.2 22.5 20.5" fill="none" stroke="#000" stroke-width="2.4"/>
<path d="M17.5 14.8 L23 9.8 L23 15.5 Z" fill="#000" stroke="#000" stroke-width="0.8"/>
</svg><svg style="left:10px;top:289px" width="39" height="39" viewBox="0 0 39 39">
<rect x="7.5" y="4.5" width="18" height="15.5" fill="#fed690" stroke="#000" stroke-width="1.6"/>
<path d="M10 6 V19 M23.5 6 V19" stroke="#000" stroke-width="1.1" stroke-dasharray="1 1.2"/>
<path d="M13 8.5 H16.5 M18.5 8.5 H21 M13 10.5 H18 M19 10.5 H20.5 M13.5 12.5 H17 M17.5 12.5 H19.5 M13 14.5 H18.5 M13 16.5 H15.5 M16.5 16.5 H19" stroke="#000" stroke-width="1.1"/>
<path d="M2.5 20.5 H31.5 V27 H2.5 Z" fill="#fed690" stroke="#000" stroke-width="1.5"/>
<path d="M2.5 27 H30.5 V31.5 H2.5 Z" fill="#fed690" stroke="#000" stroke-width="1.5"/>
<path d="M31 21.5 H33.5 V27 H31" fill="#fed690" stroke="#000" stroke-width="1.2"/>
<path d="M4.5 23.5 H28.5" stroke="#000" stroke-width="1.2"/>
<rect x="5" y="28.8" width="1.4" height="1.4" fill="#000"/>
</svg></body></html>
